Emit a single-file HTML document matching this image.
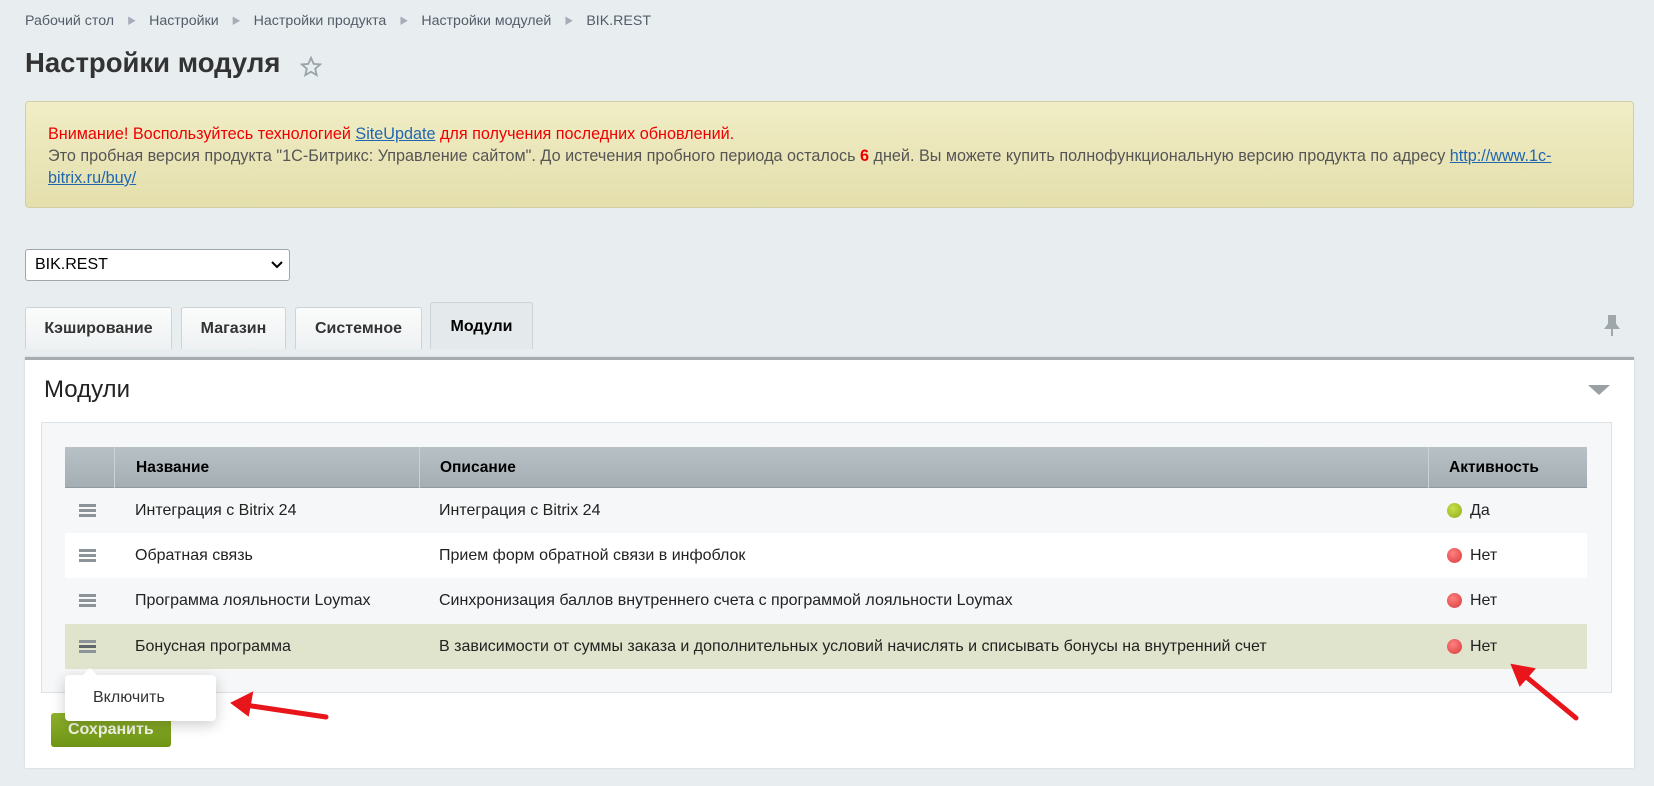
<!DOCTYPE html>
<html><head><meta charset="utf-8"><style>
*{margin:0;padding:0;box-sizing:border-box}
body{width:1654px;height:786px;overflow:hidden;background:#e8eef0;font-family:"Liberation Sans","Noto Sans CJK SC",sans-serif;position:relative;color:#000}
.a{position:absolute}
.bc{top:13px;left:25px;font-size:14.2px;color:#535c69;white-space:nowrap}
.bc span.s{color:#aab;margin:0 13px;font-size:9px;position:relative;top:-1px}
h1{position:absolute;top:47px;left:25px;font-size:27.5px;font-weight:bold;color:#333}
.warn{left:25px;top:101px;width:1609px;height:107px;background:linear-gradient(#f1edc6,#e4dfac);border:1px solid #d3cfa5;border-radius:4px;padding:21px 22px;font-size:16.2px;line-height:22px;color:#555}
.warn .r{color:#e00}
.warn a{color:#2067b0;text-decoration:underline}
.sel{left:25px;top:249px;width:265px;height:32px;background:#fff;border:1px solid #a0a6ad;border-radius:3px;font-size:16px;padding:6px 9px;color:#000}
.tab{top:307px;height:42px;background:linear-gradient(#fbfcfc,#eef1f2);border:1px solid #cdd3d6;border-bottom:none;border-radius:3px 3px 0 0;font-size:16px;font-weight:bold;color:#333;text-align:center;line-height:42px}
.panel{left:25px;top:357px;width:1609px;height:411px;background:#fff;border-top:3px solid #a6adb1;box-shadow:0 0 2px #ccd}
.inner{left:41px;top:422px;width:1571px;height:271px;background:#f5f7f8;border:1px solid #dce2e5}
.hd{top:447px;left:65px;width:1522px;height:41px;background:linear-gradient(#b8c1c6,#a4aeb3);border-bottom:1px solid #8f999e;font-size:15.5px;font-weight:bold}
.hd div{position:absolute;top:0;height:41px;line-height:41px;border-left:1px solid #ccd2d5}
.row{left:65px;width:1522px;height:45px;font-size:16px;line-height:45px;color:#222}
.row > div{position:absolute;top:0}
.row > div.menu{position:absolute;left:14px;top:16px;width:17px;height:13px;border-top:3px solid #8d9499;border-bottom:3px solid #8d9499}
.menu:after{content:"";position:absolute;left:0;right:0;top:2px;height:3px;background:#8d9499}
.menu.dk{border-color:#5f676c}.menu.dk:after{background:#5f676c}
.row > div.dot{width:15px;height:15px;border-radius:50%;top:15px}
.g{background:radial-gradient(circle at 40% 35%,#c6e04a,#8dad18)}
.rd{background:radial-gradient(circle at 40% 35%,#ff8080,#d83a3a)}
</style></head><body>
<div class="a bc">Рабочий стол<span class="s">▶</span>Настройки<span class="s">▶</span>Настройки продукта<span class="s">▶</span>Настройки модулей<span class="s">▶</span>BIK.REST</div>
<h1>Настройки модуля</h1>
<svg class="a" style="left:300px;top:56px" width="22" height="22" viewBox="0 0 24 24"><path d="M12 2l2.9 6.6 7.1.6-5.4 4.7 1.6 7-6.2-3.7-6.2 3.7 1.6-7L2 9.2l7.1-.6z" fill="none" stroke="#9aa3a8" stroke-width="2"/></svg>
<div class="a warn"><span class="r">Внимание! Воспользуйтесь технологией <a>SiteUpdate</a> для получения последних обновлений.</span><br>Это пробная версия продукта "1С-Битрикс: Управление сайтом". До истечения пробного периода осталось <b style="color:#e00">6</b> дней. Вы можете купить полнофункциональную версию продукта по адресу <a>http://www.1c-bitrix.ru/buy/</a></div>
<div class="a sel">BIK.REST<svg style="position:absolute;right:6px;top:11px" width="12" height="8" viewBox="0 0 12 8"><path d="M1 1l5 5 5-5" fill="none" stroke="#000" stroke-width="2"/></svg></div>
<div class="a tab" style="left:25px;width:147px">Кэширование</div>
<div class="a tab" style="left:181px;width:105px">Магазин</div>
<div class="a tab" style="left:295px;width:127px">Системное</div>
<div class="a tab" style="left:430px;width:103px;top:302px;height:47px;line-height:47px;background:#e4e9eb;color:#000">Модули</div>
<svg class="a" style="left:1604px;top:315px" width="16" height="22" viewBox="0 0 16 22"><path d="M4 1h8M5 1v8L2 13h12l-3-4V1M8 13v8" fill="#a0a7ab" stroke="#a0a7ab" stroke-width="2"/></svg>
<div class="a panel"></div>
<div class="a" style="left:44px;top:376px;font-size:24px;color:#222">Модули</div>
<div class="a" style="left:1588px;top:385px;width:0;height:0;border-left:11px solid transparent;border-right:11px solid transparent;border-top:10px solid #9aa1a5"></div>
<div class="a inner"></div>
<div class="a hd"><div style="left:49px;width:305px;padding-left:21px">Название</div><div style="left:354px;width:1009px;padding-left:20px">Описание</div><div style="left:1363px;width:159px;padding-left:20px">Активность</div></div>
<div class="a row" style="top:488px;background:#f5f7f8"><div class="menu"></div><div style="left:70px">Интеграция с Bitrix 24</div><div style="left:374px">Интеграция с Bitrix 24</div><div class="dot g" style="left:1382px"></div><div style="left:1405px">Да</div></div>
<div class="a row" style="top:533px;background:#fff"><div class="menu"></div><div style="left:70px">Обратная связь</div><div style="left:374px">Прием форм обратной связи в инфоблок</div><div class="dot rd" style="left:1382px"></div><div style="left:1405px">Нет</div></div>
<div class="a row" style="top:578px;background:#f5f7f8"><div class="menu"></div><div style="left:70px">Программа лояльности Loymax</div><div style="left:374px">Синхронизация баллов внутреннего счета с программой лояльности Loymax</div><div class="dot rd" style="left:1382px"></div><div style="left:1405px">Нет</div></div>
<div class="a row" style="top:624px;background:#e1e4cc"><div class="menu dk"></div><div style="left:70px">Бонусная программа</div><div style="left:374px">В зависимости от суммы заказа и дополнительных условий начислять и списывать бонусы на внутренний счет</div><div class="dot rd" style="left:1382px"></div><div style="left:1405px">Нет</div></div>
<div class="a" style="left:51px;top:713px;width:120px;height:34px;background:linear-gradient(#8fb22b,#6e9416);border-radius:3px;color:#f3f7e6;font-weight:bold;font-size:16px;line-height:34px;padding-left:17px">Сохранить</div>
<div class="a" style="left:65px;top:675px;width:151px;height:46px;background:#fff;border-radius:4px;box-shadow:0 4px 14px rgba(0,0,0,.2);font-size:16px;color:#333;line-height:46px;padding-left:28px">Включить</div>
<div class="a" style="left:82px;top:668px;width:0;height:0;border-left:8px solid transparent;border-right:8px solid transparent;border-bottom:8px solid #fff"></div>
<svg class="a" style="left:0;top:0" width="1654" height="786"><g stroke="#e8161b" stroke-width="5" stroke-linecap="round" fill="#e8161b"><line x1="326" y1="717" x2="245" y2="705"/><path d="M232 703l20-10-4 22z" stroke-width="2"/><line x1="1576" y1="718" x2="1524" y2="675"/><path d="M1512 665l22 4-14 16z" stroke-width="2"/></g></svg>
</body></html>
